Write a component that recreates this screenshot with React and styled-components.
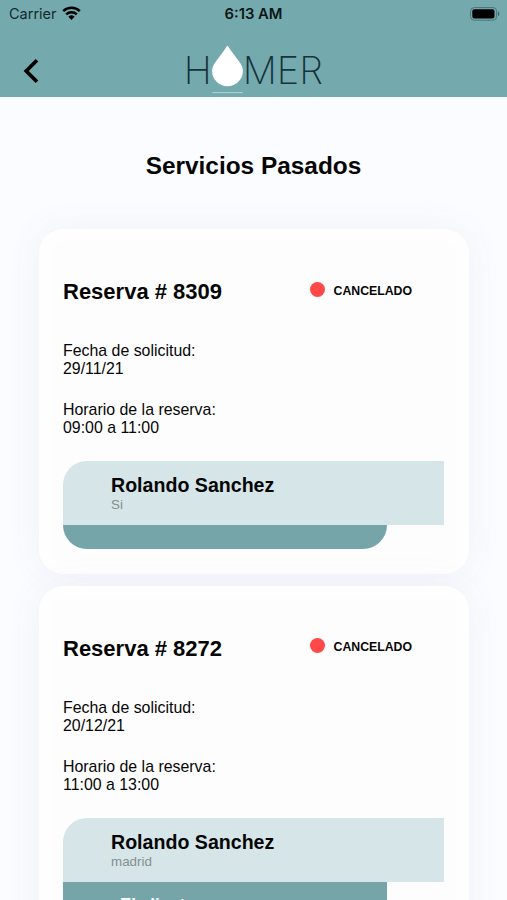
import React from 'react';
import styled, { createGlobalStyle } from 'styled-components';

const bookings = [
  {
    id: 8309,
    status: 'CANCELADO',
    requested: '29/11/21',
    schedule: '09:00 a 11:00',
    name: 'Rolando Sanchez',
    place: 'Si',
    note: ''
  },
  {
    id: 8272,
    status: 'CANCELADO',
    requested: '20/12/21',
    schedule: '11:00 a 13:00',
    name: 'Rolando Sanchez',
    place: 'madrid',
    note: 'El cliente'
  }
];

const WifiIcon = () => (
  <svg width="19" height="15" viewBox="0 0 19 15">
    <g fill="none" stroke="#000" strokeWidth="2.5">
      <path d="M1.2 5.1a12 12 0 0 1 16.6 0" />
      <path d="M4.2 8.4a7.7 7.7 0 0 1 10.6 0" />
    </g>
    <path d="M9.5 14.1l-3.1-3.3a4.5 4.5 0 0 1 6.2 0z" />
  </svg>
);

const BatteryIcon = () => (
  <svg width="30" height="14" viewBox="0 0 30 14">
    <rect x="0.6" y="0.6" width="26" height="12.6" rx="3.6" fill="none" stroke="#4b7478" />
    <rect x="2.3" y="2.2" width="22.2" height="9.4" rx="2" />
    <path d="M28 4.6c1.8.7 1.8 3.9 0 4.6z" fill="#3f6064" />
  </svg>
);

const BackIcon = () => (
  <svg width="16" height="26" viewBox="0 0 16 26">
    <path d="M14 2.2L3.2 13 14 23.8" fill="none" stroke="#000" strokeWidth="3.7" />
  </svg>
);

const Drop = () => (
  <svg width="31" height="50" viewBox="0.500 0 31 50">
    <path
      d="M16 1C16.600 1 17 1.700 17.600 2.700C21 8 24.500 12.200 28 17C30.200 20.200 31.400 22.700 31.400 26A15.400 15.300 0 0 1 .6 26C.6 22.700 1.800 20.200 4 17C7.500 12.200 11 8 14.400 2.700C15 1.700 15.400 1 16 1z"
      fill="#fff"
    />
    <path d="M.8 47.600h30.400" stroke="#b4d3d5" strokeWidth="1" />
  </svg>
);

const Booking = ({ id, status, requested, schedule, name, place, note }) => (
  <Card>
    <CardHead>
      <Reference>Reserva # {id}</Reference>
      <Dot />
      <Status>{status}</Status>
    </CardHead>
    <Detail>
      Fecha de solicitud:
      <br />
      {requested}
    </Detail>
    <Detail>
      Horario de la reserva:
      <br />
      {schedule}
    </Detail>
    <Client>
      <ClientName>{name}</ClientName>
      <ClientPlace>{place}</ClientPlace>
    </Client>
    <Footer $open={!!note}>{note}</Footer>
  </Card>
);

const App = () => (
  <Screen>
    <GlobalStyle />
    <Header>
      <StatusBar>
        <Carrier>
          Carrier <WifiIcon />
        </Carrier>
        <Time>6:13 AM</Time>
        <Battery>
          <BatteryIcon />
        </Battery>
      </StatusBar>
      <NavBar>
        <BackButton aria-label="Volver">
          <BackIcon />
        </BackButton>
        <Logo>
          <LogoText>H</LogoText>
          <Drop />
          <LogoText>MER</LogoText>
        </Logo>
      </NavBar>
    </Header>
    <Title>Servicios Pasados</Title>
    <List>
      {bookings.map(booking => (
        <Booking key={booking.id} {...booking} />
      ))}
    </List>
  </Screen>
);

export default App;

const GlobalStyle = createGlobalStyle`
  * {
    box-sizing: border-box;
  }

  body {
    margin: 0;
    background-color: #fbfcff;
    overflow: hidden;
  }
`;

const Screen = styled.div`
  height: 900px;
  overflow: hidden;
  background-color: #fbfcff;
  color: #060606;
  font-family: "Liberation Sans", Arial, sans-serif;
`;

const Header = styled.header`
  height: 97px;
  background-color: #74aaae;
`;

const StatusBar = styled.div`
  display: grid;
  grid-template-columns: 1fr auto 1fr;
  align-items: center;
  height: 27px;
  padding: 0 7px 0 9px;
  color: #000;
  font-family: Inter, sans-serif;
  font-size: 14.5px;
`;

const Carrier = styled.span`
  display: flex;
  align-items: center;
  gap: 5px;
  color: #14292b;
`;

const Time = styled.span`
  margin-left: -2px;
  color: #0b1516;
  font-size: 14.8px;
  font-weight: 600;
`;

const Battery = styled.span`
  display: flex;
  justify-content: flex-end;
`;

const NavBar = styled.div`
  display: grid;
  grid-template-columns: 183.7px 1fr;
  height: 70px;
`;

const BackButton = styled.button`
  align-self: center;
  justify-self: start;
  display: flex;
  margin: 17px 0 0 23px;
  padding: 0;
  border: none;
  background: none;
`;

const Logo = styled.div`
  display: flex;
  align-items: flex-start;
  padding-top: 18px;
`;

const LogoText = styled.span`
  color: #14333b;
  font-family: Inter, sans-serif;
  font-size: 38px;
  font-weight: 200;
  line-height: 50px;
`;

const Title = styled.h1`
  margin: 0;
  padding: 55px 0 49px;
  font-size: 24.4px;
  line-height: 28px;
  text-align: center;
`;

const List = styled.main`
  display: flex;
  flex-direction: column;
  gap: 12px;
  padding: 0 38px 0 39px;
`;

const Card = styled.section`
  padding: 49px 25px 25px 24px;
  border-radius: 25px;
  background-color: #fdfdfd;
  box-shadow: 0 0 36px rgba(80, 100, 135, 0.07), inset 0 0 0 12px #fefefe;
`;

const CardHead = styled.div`
  display: flex;
  align-items: center;
  height: 28px;
  margin-bottom: 36px;
`;

const Reference = styled.h2`
  width: 246.5px;
  margin: 0;
  font-size: 22px;
  line-height: 28px;
`;

const Dot = styled.span`
  width: 15px;
  height: 15px;
  margin: -6px 9px 0 0;
  border-radius: 50%;
  background-color: #ff4848;
`;

const Status = styled.span`
  margin-top: -3px;
  font-size: 12.3px;
  font-weight: bold;
`;

const Detail = styled.p`
  margin: 0 0 22px;
  font-size: 15.9px;
  line-height: 18.3px;
`;

const Client = styled.div`
  height: 63.5px;
  margin-top: 24.3px;
  padding: 13px 0 0 48px;
  border-top-left-radius: 24px;
  background-color: #d6e5e7;
`;

const ClientName = styled.h3`
  margin: 0;
  font-size: 19.6px;
  line-height: 23px;
`;

const ClientPlace = styled.p`
  margin: 0;
  color: #858e8f;
  font-size: 13.4px;
  line-height: 16px;
`;

const Footer = styled.div`
  width: 324px;
  height: ${props => props.$open ? "88px" : "24px"};
  padding: ${props => props.$open ? "13px 57px" : "0"};
  border-radius: 0 0 24px 24px;
  background-color: #76a5a9;
  color: #fff;
  font-size: 17px;
  font-weight: bold;
`;
